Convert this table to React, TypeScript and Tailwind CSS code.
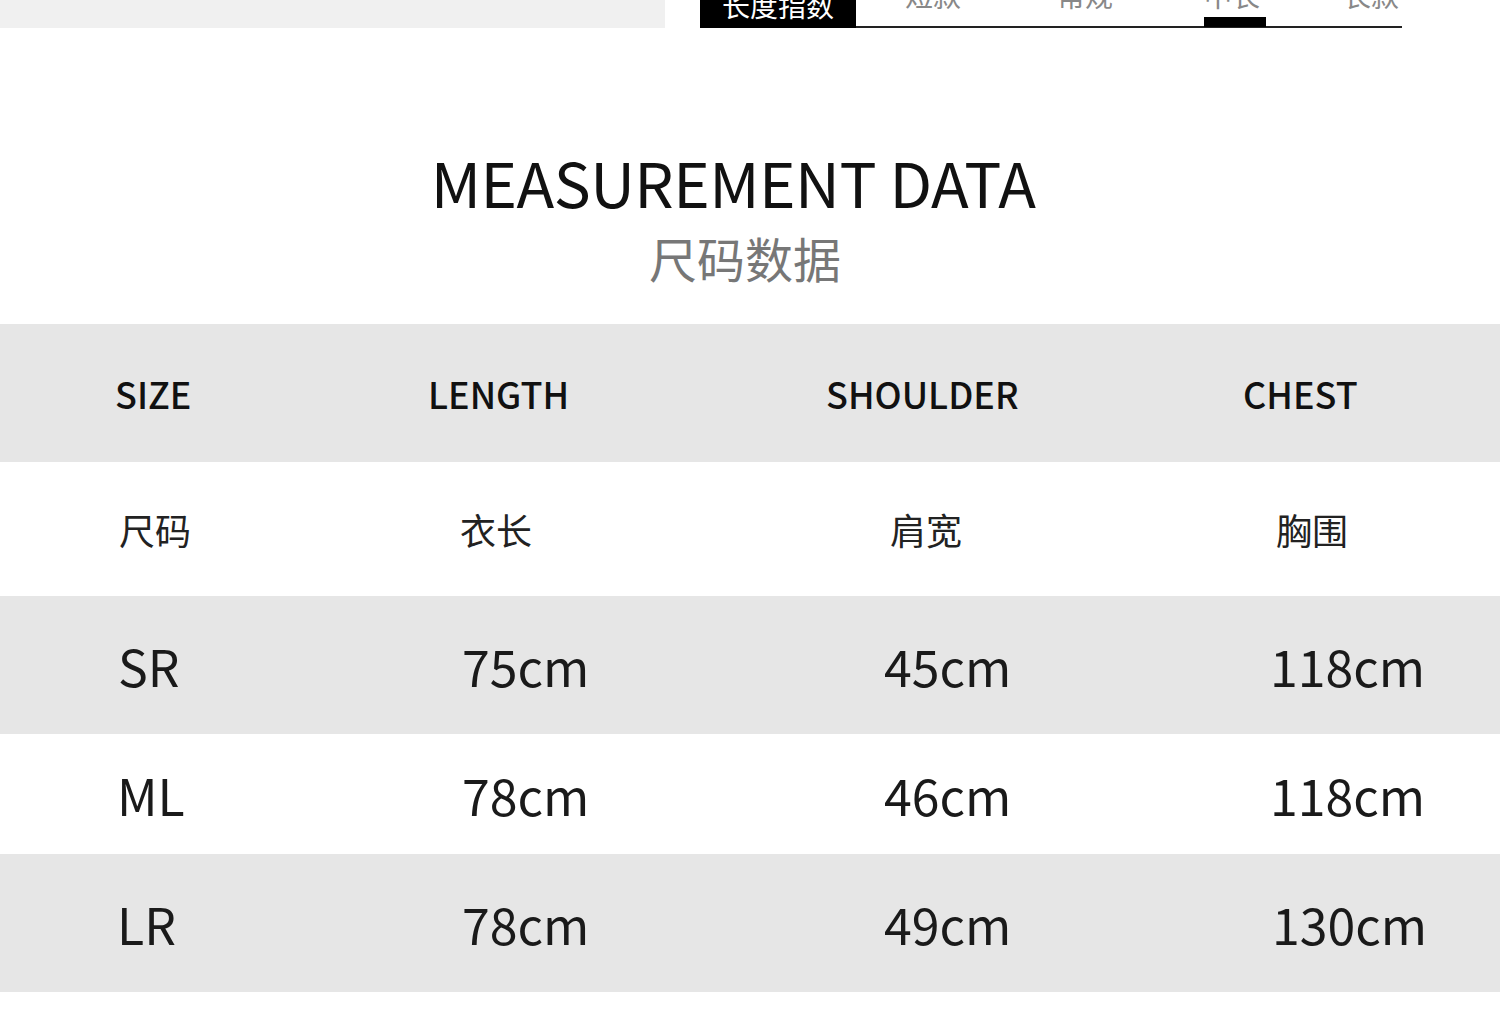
import React from "react";

const FONT = { fontFamily: '"Noto Sans CJK SC", "Noto Sans", sans-serif' };

type Cell = { text: string; left: number };

const colStarts = [0, 340, 720, 1130];

function Row({ cells, h, bg, cls }: { cells: Cell[]; h: string; bg: string; cls: string }) {
  return (
    <div className={`grid grid-cols-[340px_380px_410px_370px] items-center ${h} ${bg}`}>
      {cells.map((c, i) => (
        <div key={i} className={`whitespace-nowrap ${cls}`} style={{ paddingLeft: c.left - colStarts[i] }}>
          {c.text}
        </div>
      ))}
    </div>
  );
}

export default function App() {
  return (
    <div className="w-[1500px] h-[1036px] bg-white overflow-hidden flex flex-col" style={FONT}>
      {/* top bar (cut off) */}
      <div className="h-[28px] flex overflow-hidden shrink-0">
        <div className="w-[665px] h-[28px] bg-[#f0f0f0]" />
        <div className="ml-[35px] w-[702px] h-[28px] flex relative">
          <div className="w-[156px] h-[28px] bg-black overflow-hidden">
            <div className="mt-[-9px] pl-[22px] text-[28px] leading-[28px] text-white">长度指数</div>
          </div>
          <div className="flex-1 h-[28px] border-b-2 border-[#222] flex items-start overflow-hidden">
            <div className="ml-[49px] mt-[-19px] text-[28px] leading-[28px] text-[#888]">短款</div>
            <div className="ml-[96px] mt-[-19px] text-[28px] leading-[28px] text-[#888]">常规</div>
            <div className="ml-[91px] mt-[-19px] text-[28px] leading-[28px] text-[#888]">中长</div>
            <div className="ml-[83px] mt-[-19px] text-[28px] leading-[28px] text-[#888]">长款</div>
          </div>
          <div className="absolute left-[504px] top-[17px] w-[62px] h-[10px] bg-black" />
        </div>
      </div>

      {/* title */}
      <div className="mt-[119px] text-center text-[62px] leading-[68px] text-[#111] tracking-[-0.5px] pr-[34px]">
        MEASUREMENT DATA
      </div>
      <div className="mt-[18px] text-center text-[48px] leading-[48px] text-[#777] pr-[10px]">
        尺码数据
      </div>

      {/* table */}
      <div className="mt-[43px] flex flex-col">
        <Row
          h="h-[138px]"
          bg="bg-[#e6e6e6]"
          cls="text-[36px] font-medium text-[#111]"
          cells={[
            { text: "SIZE", left: 115 },
            { text: "LENGTH", left: 428 },
            { text: "SHOULDER", left: 826 },
            { text: "CHEST", left: 1243 },
          ]}
        />
        <Row
          h="h-[134px]"
          bg="bg-white"
          cls="text-[36px] text-[#222]"
          cells={[
            { text: "尺码", left: 119 },
            { text: "衣长", left: 460 },
            { text: "肩宽", left: 890 },
            { text: "胸围", left: 1276 },
          ]}
        />
        <Row
          h="h-[138px]"
          bg="bg-[#e6e6e6]"
          cls="text-[50px] text-[#1a1a1a]"
          cells={[
            { text: "SR", left: 118 },
            { text: "75cm", left: 462 },
            { text: "45cm", left: 884 },
            { text: "118cm", left: 1270 },
          ]}
        />
        <Row
          h="h-[120px]"
          bg="bg-white"
          cls="text-[50px] text-[#1a1a1a]"
          cells={[
            { text: "ML", left: 117 },
            { text: "78cm", left: 462 },
            { text: "46cm", left: 884 },
            { text: "118cm", left: 1270 },
          ]}
        />
        <Row
          h="h-[138px]"
          bg="bg-[#e6e6e6]"
          cls="text-[50px] text-[#1a1a1a]"
          cells={[
            { text: "LR", left: 117 },
            { text: "78cm", left: 462 },
            { text: "49cm", left: 884 },
            { text: "130cm", left: 1272 },
          ]}
        />
      </div>
    </div>
  );
}
